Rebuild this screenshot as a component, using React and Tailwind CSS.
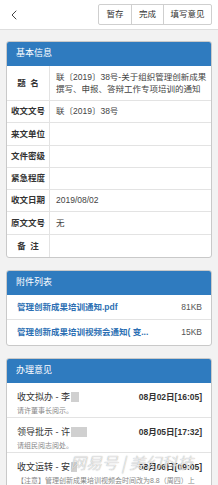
import { ChevronLeft } from "lucide-react";

const FONT = { fontFamily: '"Liberation Sans", "Noto Sans CJK SC", sans-serif' };

const infoRows = [
  { label: "收文文号", value: "联〔2019〕38号" },
  { label: "来文单位", value: "" },
  { label: "文件密级", value: "" },
  { label: "紧急程度", value: "" },
  { label: "收文日期", value: "2019/08/02" },
  { label: "原文文号", value: "无" },
  { label: "备  注", value: "" },
];

const files = [
  { name: "管理创新成果培训通知.pdf", size: "81KB" },
  { name: "管理创新成果培训视频会通知( 变...", size: "15KB" },
];

const opinions = [
  { title: "收文拟办 - 李", blur: "w-[8px]", time: "08月02日[16:05]", note: "请许董事长阅示。" },
  { title: "领导批示 - 许", blur: "w-[16px]", time: "08月05日[17:32]", note: "请组民阅志阅处。" },
  { title: "收文运转 - 安", blur: "w-[6px]", time: "08月06日[09:05]", note: "【注意】管理创新成果培训视频会时间改为8.8（周四）上" },
];

const Card = ({ title, children }) => (
  <div className="mx-[6px] rounded-[3px] border border-[#c9c9c9] bg-white overflow-hidden">
    <div className="h-[24px] bg-[#2f7bbf] pl-[9px] flex items-center text-[9px] text-white">{title}</div>
    {children}
  </div>
);

export default function App() {
  return (
    <div className="relative w-[218px] h-[485px] overflow-hidden bg-[#f2f2f2] text-[#333]" style={FONT}>
      {/* top bar */}
      <div className="h-[30px] bg-white border-b border-[#dedede] flex items-center justify-between pl-[6px] pr-[6px]">
        <ChevronLeft className="w-[16px] h-[16px] text-[#444]" strokeWidth={1.5} />
        <div className="flex h-[21px] border border-[#cfcfcf] rounded-[2px] text-[8.5px] text-[#333] mb-[1px]">
          <button className="w-[32px] flex items-center justify-center">暂存</button>
          <button className="w-[32px] flex items-center justify-center border-l border-[#cfcfcf]">完成</button>
          <button className="w-[48px] flex items-center justify-center border-l border-[#cfcfcf]">填写意见</button>
        </div>
      </div>

      <div className="pt-[11px] flex flex-col gap-[12px]">
        {/* basic info */}
        <Card title="基本信息">
          <div className="flex h-[35px] border-b border-[#e3e3e3]">
            <div className="w-[43px] shrink-0 border-r border-[#e3e3e3] flex items-center justify-center text-[8.5px] font-semibold whitespace-pre">
              题  名
            </div>
            <div className="pl-[6px] pr-[2px] flex items-center text-[8.5px] leading-[12px] text-[#444] whitespace-nowrap">
              <p>
                联〔2019〕38号-关于组织管理创新成果
                <br />
                撰写、申报、答辩工作专项培训的通知
              </p>
            </div>
          </div>
          {infoRows.map((r, i) => (
            <div
              key={r.label}
              className={`flex h-[22.3px] ${i < infoRows.length - 1 ? "border-b border-[#e3e3e3]" : ""}`}
            >
              <div className="w-[43px] shrink-0 border-r border-[#e3e3e3] flex items-center justify-center text-[8.5px] font-semibold whitespace-pre">
                {r.label}
              </div>
              <div className="pl-[6px] flex items-center text-[8.5px] text-[#444]">{r.value}</div>
            </div>
          ))}
        </Card>

        {/* attachments */}
        <Card title="附件列表">
          {files.map((f, i) => (
            <div
              key={f.name}
              className={`h-[25px] pl-[10px] pr-[9px] flex items-center justify-between ${i === 0 ? "border-b border-[#e3e3e3]" : ""}`}
            >
              <span className="text-[8.5px] font-semibold text-[#2c6fb3]">{f.name}</span>
              <span className="text-[8.5px] text-[#555]">{f.size}</span>
            </div>
          ))}
        </Card>

        {/* opinions */}
        <Card title="办理意见">
          {opinions.map((o, i) => (
            <div
              key={o.title}
              className={`h-[35px] pl-[10px] pr-[9px] pt-[8px] ${i < opinions.length - 1 ? "border-b border-[#e3e3e3]" : ""}`}
            >
              <div className="flex items-center justify-between">
                <span className="flex items-center text-[9px] text-[#333] leading-[12px]">
                  {o.title}
                  <span className={`${o.blur} h-[10px] bg-[#d0d0d0] ml-[1px]`} />
                </span>
                <span className="text-[8.5px] font-semibold text-[#333] leading-[12px]">{o.time}</span>
              </div>
              <div className="text-[7px] text-[#888] leading-[11px] mt-[2px] whitespace-nowrap">{o.note}</div>
            </div>
          ))}
        </Card>
      </div>

      {/* watermark */}
      <div
        className="absolute left-[70px] top-[450px] text-[16px] font-light italic text-white/85 whitespace-nowrap pointer-events-none"
        style={{ fontFamily: '"Noto Sans CJK SC", sans-serif', textShadow: "0 0 1px #777" }}
      >
        网易号 | 美幻科技
      </div>
    </div>
  );
}
